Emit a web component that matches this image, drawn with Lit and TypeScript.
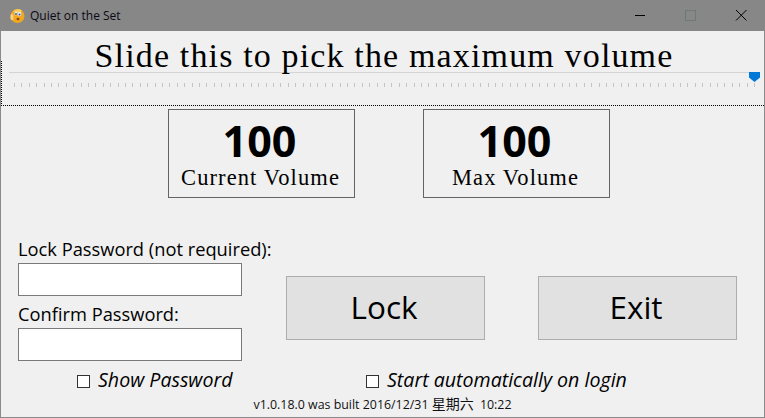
import { LitElement, html, css, svg } from "lit";
import { customElement } from "lit/decorators.js";

const ticks = Array.from({ length: 101 }, (_, i) => 12 + i * 7.4);

@customElement("app-root")
export class AppRoot extends LitElement {
  static styles = css`
    :host { display: block; width: 765px; height: 418px; overflow: hidden; }
    .win { box-sizing: border-box; width: 765px; height: 418px; background: #f0f0f0; border: 1px solid #8a8a8a; border-top: 0; display: flex; flex-direction: column; font-family: "Open Sans", sans-serif; color: #000; }
    .titlebar { height: 31px; flex: none; margin: 0 -1px; background: #878787; display: flex; align-items: center; padding-left: 9px; gap: 5px; font: 12px "Open Sans", sans-serif; color: #0a0a14; }
    .titlebar .name { flex: 1; }
    .ctl { display: block; width: 46px; height: 31px; }
    .heading { height: 30px; flex: none; position: relative; z-index: 1; text-align: center; font: 34px/50px "Liberation Serif", serif; letter-spacing: 1.15px; white-space: nowrap; padding-left: 3px; }
    .slider { flex: none; height: 45px; box-sizing: border-box; border-left: 1px dotted #000; border-bottom: 1px dotted #000; }
    .slider svg { display: block; }
    .boxes { display: flex; justify-content: flex-start; gap: 68px; padding: 3px 0 0 167px; flex: none; }
    .box { box-sizing: border-box; width: 187px; height: 89px; border: 1px solid #646464; display: flex; flex-direction: column; align-items: center; }
    .num { font: 700 43px/44px "Open Sans", sans-serif; margin: 9px 4px 0 0; }
    .cap { font: 22.5px/24px "Liberation Serif", serif; letter-spacing: 1.1px; margin: 3px 2px 0 0; }
    .lower { flex: none; display: flex; padding: 41px 0 0 17px; }
    .fields { width: 268px; flex: none; }
    .lbl { font: 18.3px/20px "Open Sans", sans-serif; white-space: nowrap; height: 24px; }
    .input { box-sizing: border-box; width: 224px; height: 33px; background: #fff; border: 1px solid #7a7a7a; margin-bottom: 8px; }
    .buttons { display: flex; gap: 53px; padding-top: 37px; }
    .btn { box-sizing: border-box; width: 199px; height: 64px; background: #e1e1e1; border: 1px solid #adadad; display: flex; align-items: center; justify-content: center; font: 31.5px "Open Sans", sans-serif; padding: 0 3px 3px 0; }
    .checks { flex: none; display: flex; padding: 0 0 0 76px; height: 24px; }
    .chk { display: flex; align-items: center; gap: 8px; font: italic 19.6px/24px "Open Sans", sans-serif; white-space: nowrap; }
    .chk.a { width: 289px; }
    .chk .t { margin-top: -2px; }
    .mark { box-sizing: border-box; width: 13px; height: 13px; background: #fff; border: 1px solid #333; flex: none; }
    .ver { flex: none; text-align: center; font: 12.4px/16px "Open Sans", "Noto Sans CJK SC", sans-serif; margin-top: 3px; color: #111; }
    .ver .cjk { font-size: 14px; margin-right: 3px; }
  `;

  render() {
    return html`<div class="win">
      <div class="titlebar">
        <svg width="16" height="16" viewBox="0 0 16 16">
          <circle cx="8.500" cy="8" r="7" fill="#f2a81e"/>
          <path d="M4 3.500a7 7 0 0 1 9-1l-2 2-4-.5z" fill="#f9cf5c"/>
          <ellipse cx="10.500" cy="6" rx="1.800" ry="2.200" fill="#e8eef8"/><ellipse cx="7" cy="5.500" rx="1.400" ry="2" fill="#e8eef8"/>
          <circle cx="10.500" cy="6.500" r="1" fill="#2a4fa8"/><circle cx="7" cy="6" r=".9" fill="#2a4fa8"/>
          <ellipse cx="9" cy="11" rx="1.500" ry="1.200" fill="#8a4a10"/>
          <rect x="1.500" y="6" width="3" height="6" rx="1.500" fill="#fbd27a"/>
        </svg>
        <span class="name">Quiet on the Set</span>
        <svg class="ctl" viewBox="0 0 46 31"><path d="M18 15.500h10" stroke="#000" fill="none"/></svg>
        <svg class="ctl" viewBox="0 0 46 31"><rect x="17.500" y="10.500" width="10" height="10" stroke="#6f7a78" fill="none"/></svg>
        <svg class="ctl" viewBox="0 0 46 31"><path d="M17 10l10.500 10.500M27.500 10L17 20.500" stroke="#000" fill="none"/></svg>
      </div>
      <div class="heading">Slide this to pick the maximum volume</div>
      <div class="slider">
        <svg width="763" height="43" viewBox="0 0 763 43">
          <rect x="7" y="11" width="750" height="1" fill="#d4d4d4"/>
          ${ticks.map((x) => svg`<rect x="${Math.round(x)}" y="22" width="1" height="4" fill="#c4c4c4"/>`)}
          <path d="M747 11h11v5.500l-5.500 4.500-5.500-4.500z" fill="#0078d7"/>
        </svg>
      </div>
      <div class="boxes">
        <div class="box"><div class="num">100</div><div class="cap">Current Volume</div></div>
        <div class="box"><div class="num">100</div><div class="cap">Max Volume</div></div>
      </div>
      <div class="lower">
        <div class="fields">
          <div class="lbl">Lock Password (not required):</div>
          <div class="input"></div>
          <div class="lbl">Confirm Password:</div>
          <div class="input"></div>
        </div>
        <div class="buttons">
          <div class="btn">Lock</div>
          <div class="btn">Exit</div>
        </div>
      </div>
      <div class="checks">
        <div class="chk a"><span class="mark"></span><span class="t">Show Password</span></div>
        <div class="chk"><span class="mark"></span><span class="t">Start automatically on login</span></div>
      </div>
      <div class="ver">v1.0.18.0 was built 2016/12/31 <span class="cjk">星期六</span> 10:22</div>
    </div>`;
  }
}
